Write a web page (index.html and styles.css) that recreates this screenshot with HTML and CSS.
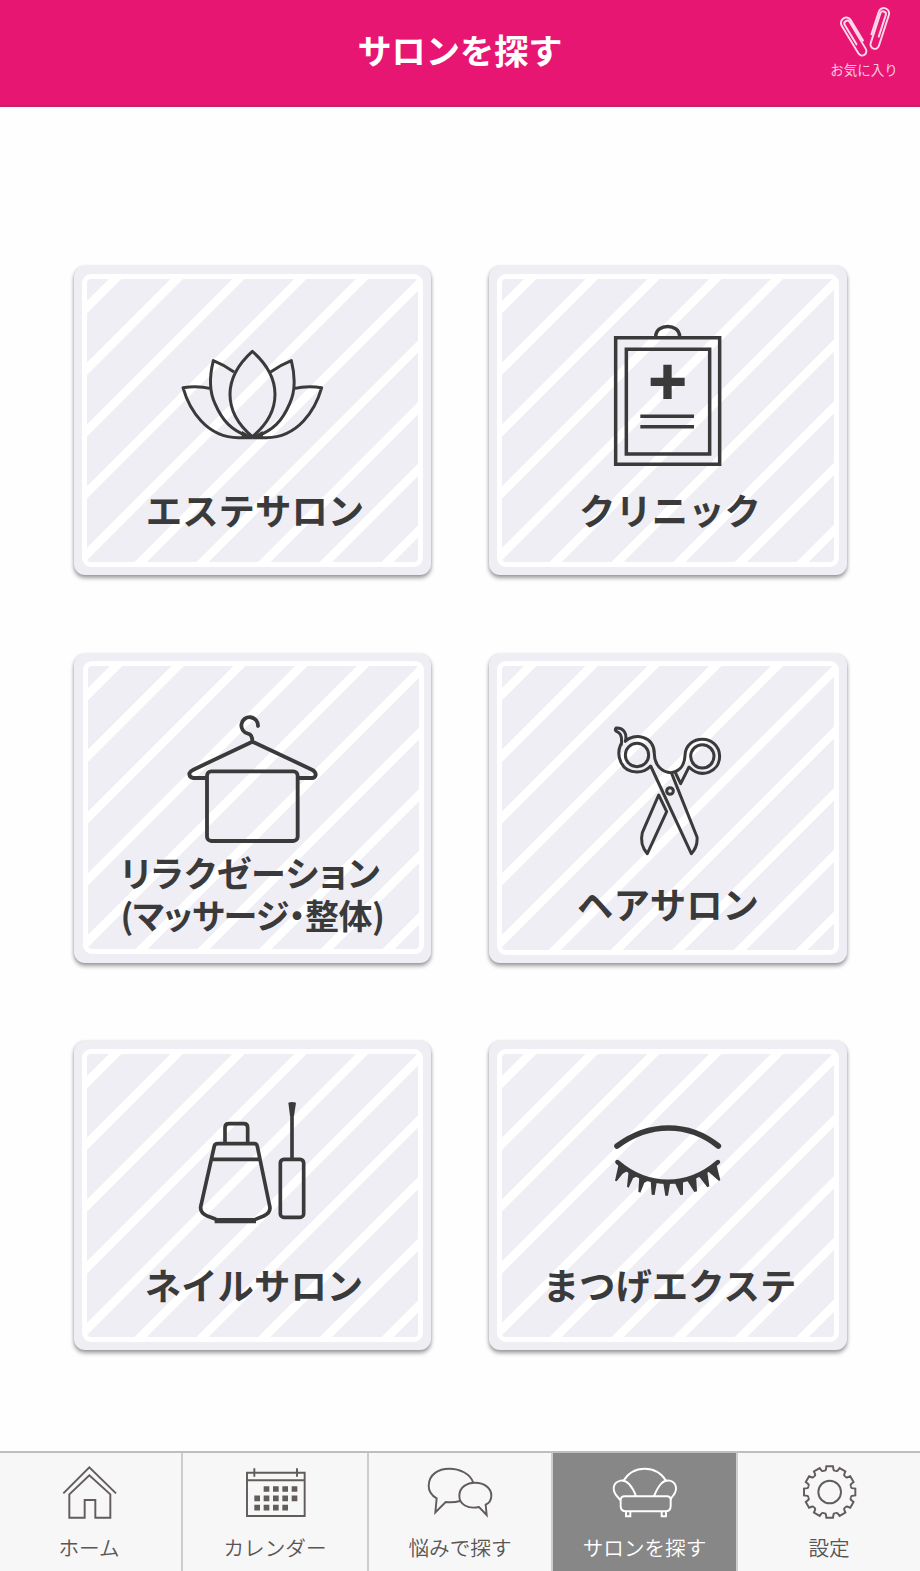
FILE: index.html
```html
<!DOCTYPE html>
<html lang="ja">
<head>
<meta charset="utf-8">
<title>サロンを探す</title>
<link rel="stylesheet" href="styles.css">
</head>
<body>
<div class="app">
  <header class="header">
    <h1 class="header-title">サロンを探す</h1>
    <a class="favorite">
      <svg class="favorite-icon" viewBox="33 15 168 160">
        <g transform="translate(88 109) rotate(-31)"><path d="M16 24V-47A16 16 0 0 0-16-47V50A13 13 0 0 0 10 50V-44A8.500 8.500 0 0 0-7-44V24"/></g>
        <g transform="translate(162 85) rotate(18)"><path d="M-16 24V-47A16 16 0 0 1 16-47V50A13 13 0 0 1-10 50V-44A8.500 8.500 0 0 1 7-44V24"/></g>
      </svg>
      <span class="favorite-label">お気に入り</span>
    </a>
  </header>

  <main class="grid">
    <a class="card card-left">
      <div class="frame">
        <svg class="icon" viewBox="336 195 480 450">
          <path d="M577 289C545 318 510 360 510 418C510 470 535 510 577 545C620 510 645 470 645 418C645 360 610 318 577 289Z"/>
          <g id="petals">
            <path d="M522 351C500 335 480 325 460 317C448 365 448 410 465 446C488 500 515 525 565 545M453 401C425 394 395 394 369 398C388 465 440 548 535 548H577"/>
            <path class="solid" d="M546 528L577 545V549H545Z"/>
          </g>
          <use href="#petals" transform="translate(1154 0) scale(-1 1)"/>
        </svg>
        <div class="label label-esthe">エステサロン</div>
      </div>
    </a>
    <a class="card">
      <div class="frame">
        <svg class="icon icon-clinic" viewBox="324 195 480 450">
          <path d="M407 248H719V628H407ZM439 283H689V597H439ZM527 245C528 204 598 204 599 245M481 484H642M481 515H642"/>
          <path class="solid" d="M550 329H575V368H614V393H575V432H550V393H512V368H550Z"/>
        </svg>
        <div class="label label-clinic">クリニック</div>
      </div>
    </a>
    <a class="card card-left card-relax">
      <div class="frame">
        <svg class="icon icon-relax" viewBox="339 188 480 450">
          <path d="M594 242A25 25 0 1 0 564 265Q577 267 577 289M440 398H400Q387 396 388 384Q390 378 400 373L577 289L756 373Q768 379 767 390Q764 398 756 398H715"/>
          <rect x="441" y="378" width="272" height="209" rx="13"/>
        </svg>
        <div class="label label-relax">
          <div class="line-a">リラクゼーション</div>
          <div class="line-b">(マッサージ・整体)</div>
        </div>
      </div>
    </a>
    <a class="card">
      <div class="frame">
        <svg class="icon icon-hair" viewBox="324 188 480 450">
          <circle cx="471" cy="329" r="35"/><circle cx="667" cy="333" r="35"/>
          <path d="M422 298C408 330 422 380 471 380C488 380 502 373 512 362L634 625C648 610 653 595 651 575L574 382C545 382 523 358 523 326C523 270 460 262 436 288C442 266 432 247 408 248Q403 255 411 259C422 263 427 275 424 298M574 382C600 378 614 358 615 330C618 265 717 265 719 333C719 378 665 403 627 365L602 415L588 386"/>
          <path d="M536 449L487 562C480 590 487 608 502 625L560 499Z"/>
          <circle cx="570" cy="437" r="10"/>
        </svg>
        <div class="label label-hair">ヘアサロン</div>
      </div>
    </a>
    <a class="card card-left">
      <div class="frame">
        <svg class="icon icon-nail" viewBox="336 195 480 450">
          <path d="M495 340V293Q495 281 507 281H551Q563 281 563 293V340M456 388H600M468 568L444 559Q417 548 423 526L463 348Q465 341 473 341H583Q590 341 592 349L629 528Q634 547 611 558L586 568"/>
          <path class="solid" d="M464 564H588V580H464Z"/>
          <rect x="661" y="388" width="70" height="174" rx="11"/>
          <path d="M696 386V250"/>
          <path class="solid" d="M685 218Q696 214 708 218L702 258H690Z"/>
        </svg>
        <div class="label label-nail">ネイルサロン</div>
      </div>
    </a>
    <a class="card">
      <div class="frame">
        <svg class="icon icon-lash" viewBox="324 195 480 450">
          <path class="brow" d="M411 348C508 276 625 276 715 348"/>
          <path class="lid" d="M412 396C504 475 623 475 714 396"/>
          <path class="solid" d="M416 402L405 452L410 454L428 431L444 422Z"/>
          <path class="solid" d="M446 422L441 470L446 473L459 445L473 438Z"/>
          <path class="solid" d="M478 438L475 485L481 488L493 458L504 452Z"/>
          <path class="solid" d="M512 452L515 494L524 495L530 458L540 456Z"/>
          <path class="solid" d="M549 454L556 497H564L571 456Z"/>
          <path class="solid" d="M583 455L601 495L609 494V450Z"/>
          <path class="solid" d="M618 446L643 486L651 484L648 436Z"/>
          <path class="solid" d="M652 433L682 472L688 469L681 420Z"/>
          <path class="solid" d="M682 422L717 453L721 450L709 402Z"/>
        </svg>
        <div class="label label-lash">まつげエクステ</div>
      </div>
    </a>
  </main>

  <nav class="tabs">
    <a class="tab tab-home">
      <svg class="tab-icon" viewBox="147 60 240 192">
        <path d="M190 160L268 82L348 160M208 163L268 106L331 163V233H286V180H254V233H208Z"/>
      </svg>
      <span>ホーム</span>
    </a>
    <a class="tab">
      <svg class="tab-icon" viewBox="705 60 240 192">
        <path d="M741 98H914V228H741ZM741 121H914M763 85V110M891 85V110"/>
        <path class="days" d="M791 147H894M763 175H894M763 203H866"/>
      </svg>
      <span>カレンダー</span>
    </a>
    <a class="tab">
      <svg class="tab-icon" viewBox="30 15 240 192">
        <path d="M189 82C173 30 58 22 56 92C56 111 66 122 80 130L76 172L107 141Q130 144 150 138M207 156C173 163 148 148 148 123C148 68 244 72 244 122C244 136 237 144 227 149L230 180Z"/>
      </svg>
      <span>悩みで探す</span>
    </a>
    <a class="tab tab-active">
      <svg class="tab-icon" viewBox="435 60 240 192">
        <path d="M490 123C520 74 588 74 619 123M528 168C514 133 500 119 482 122C459 127 456 148 468 165Q476 174 482 182M582 168C597 133 609 119 629 122C652 128 652 151 640 166Q632 174 632 181M494 169H621Q632 169 632 180V198Q632 214 616 214H498Q482 214 482 198V181Q482 169 494 169ZM498 216V229H511V216M605 216V229H618V216"/>
      </svg>
      <span>サロンを探す</span>
    </a>
    <a class="tab tab-last">
      <svg class="tab-icon" viewBox="988 60 240 192">
        <g transform="translate(1110 156)">
          <circle r="34"/>
          <path id="tooth" d="M-17.3-64.7Q-13-63-11.5-67L-10-77H10L11.5-67Q13-63 17.3-64.7"/>
          <use href="#tooth" transform="rotate(30)"/><use href="#tooth" transform="rotate(60)"/>
          <use href="#tooth" transform="rotate(90)"/><use href="#tooth" transform="rotate(120)"/>
          <use href="#tooth" transform="rotate(150)"/><use href="#tooth" transform="rotate(180)"/>
          <use href="#tooth" transform="rotate(210)"/><use href="#tooth" transform="rotate(240)"/>
          <use href="#tooth" transform="rotate(270)"/><use href="#tooth" transform="rotate(300)"/>
          <use href="#tooth" transform="rotate(330)"/>
        </g>
      </svg>
      <span>設定</span>
    </a>
  </nav>
</div>
</body>
</html>
```
FILE: styles.css
```css
* { box-sizing: border-box; }

body {
  margin: 0;
  background: #fefefe;
  color: #3a3a3b;
  font-family: "Noto Sans CJK JP", sans-serif;
}

.app {
  display: flex;
  flex-direction: column;
  height: 1571px;
  overflow: hidden;
}

/* Header */
.header {
  display: grid;
  grid-template-columns: 1fr auto 1fr;
  height: 107px;
  flex: none;
  background: #e71673;
  border-bottom: 2px solid #c52068;
  color: #fff;
}

.header-title {
  grid-column: 2;
  margin: 24px 0 0;
  font-size: 34.2px;
  line-height: 50px;
  font-weight: 700;
}

.favorite {
  grid-column: 3;
  justify-self: end;
  display: flex;
  flex-direction: column;
  align-items: center;
  width: 68px;
  margin: 5px 22px 0 0;
}

.favorite-icon {
  width: 56px;
  height: 53.3px;
  fill: none;
  stroke: #ffd9ea;
  stroke-width: 5.8;
  stroke-linecap: round;
}

.favorite-label {
  margin-top: 1px;
  font-size: 13.5px;
  line-height: 20px;
  white-space: nowrap;
  color: #fcc6de;
}

/* Category cards */
.grid {
  display: grid;
  grid-template-columns: 357px 358px;
  grid-auto-rows: 309px;
  gap: 78.5px 58px;
  padding: 159px 0 0 74px;
  flex: 1;
}

.card {
  padding: 7.5px 8px 8px 8px;
  border-radius: 11px;
  background: #efeef5;
  box-shadow: 0 3px 4px rgba(0, 0, 0, .38), 0 0 3px rgba(0, 0, 0, .12);
}

.card-relax { padding: 7.5px 7px 9px 9px; }

.frame {
  display: flex;
  flex-direction: column;
  align-items: center;
  height: 100%;
  border: 5px solid #fff;
  border-radius: 9px;
  background: repeating-linear-gradient(135deg, #efeef5 0 15.3px, #fff 15.8px 23.9px, #efeef5 24.4px 43.65px) padding-box;
}

.icon {
  flex: none;
  width: 160px;
  height: 150px;
  margin-top: 41.5px;
  fill: none;
  stroke: #3a3a3b;
  stroke-width: 9;
  stroke-linejoin: round;
}

.card-left .icon { margin-right: 1px; }
.icon .solid { fill: #3a3a3b; stroke: none; }
.icon-clinic { stroke-width: 10.5; stroke-linejoin: miter; }
.icon-relax { stroke-width: 11.5; stroke-linecap: round; }
.icon-hair { stroke-width: 9; stroke-linecap: round; }
.icon-nail { stroke-width: 11; }
.icon .brow { stroke-width: 17; stroke-linecap: round; }
.icon .lid { stroke-width: 13; stroke-linecap: round; }

.label {
  margin-top: 17px;
  font-size: 36.4px;
  line-height: 44px;
  font-weight: 700;
  white-space: nowrap;
}

.label-esthe { padding-left: 5px; }
.label-clinic { padding-left: 4px; }
.label-nail { padding-left: 3px; }
.label-lash { padding-left: 3px; }
.label-hair { margin-top: 23px; }

.label-relax {
  width: 266px;
  margin-top: -8px;
  font-size: 35px;
  line-height: 43px;
  font-feature-settings: "palt";
}

.label-relax .line-a { letter-spacing: .8px; }
.label-relax .line-b { font-size: 34px; letter-spacing: -.5px; }

/* Bottom tab bar */
.tabs {
  display: grid;
  grid-template-columns: 183px 186px 184px 185px 182px;
  height: 120px;
  flex: none;
  border-top: 2px solid #bdbdc2;
  background: #f7f7f7;
}

.tab {
  display: flex;
  flex-direction: column;
  align-items: center;
  padding-top: 7px;
  border-right: 2px solid #cdcdd1;
  font-size: 20.6px;
  line-height: 30px;
  font-weight: 350;
  color: #575555;
}

.tab-home { padding-right: 3px; }
.tab-last { border-right: 0; }
.tab-active { background: #878787; color: #fff; }

.tab-icon {
  width: 80px;
  height: 64px;
  margin-bottom: 8px;
  fill: none;
  stroke: #625c5b;
  stroke-width: 5.8;
}

.tab-active .tab-icon { stroke: #fff; }

.tab-icon .days {
  stroke-width: 17;
  stroke-dasharray: 17 11;
}
```
